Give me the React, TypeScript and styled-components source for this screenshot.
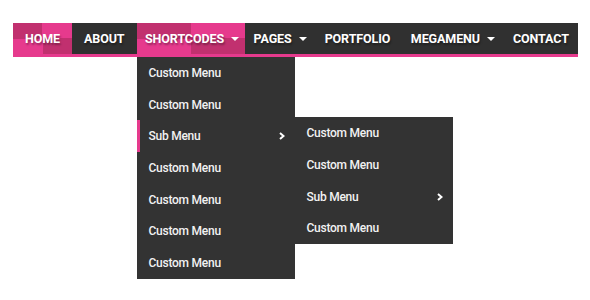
import styled, { createGlobalStyle } from "styled-components";

const GlobalStyle = createGlobalStyle`
  body {
    margin: 0;
    background: #ffffff;
    font-family: Roboto, "Liberation Sans", sans-serif;
  }
`;

const Page = styled.div`
  min-height: 300px;
  padding: 23px 0 0 13px;
  box-sizing: border-box;
`;

const NavBar = styled.ul`
  display: flex;
  width: 565px;
  height: 31px;
  margin: 0;
  padding: 0;
  list-style: none;
  background: #303030;
  border-bottom: 3px solid #e63a8d;
`;

const NavItem = styled.li<{ $active?: boolean; $caret?: boolean }>`
  position: relative;
  display: flex;
  align-items: center;
  padding: ${props => (props.$caret ? "0 6px 0 8.5px" : "0 12px")};
  color: #ffffff;
  font-size: 12.5px;
  font-weight: 700;
  letter-spacing: -0.1px;
  text-transform: uppercase;
  cursor: pointer;
  background: ${props =>
    props.$active
      ? "conic-gradient(#e63a8d 0 25%, #c1306f 0 50%, #e63a8d 0 75%, #c1306f 0)"
      : "transparent"};
  text-shadow: 1px 2px 2px rgba(0, 0, 0, 0.35);
`;

const Caret = styled.span`
  width: 0;
  height: 0;
  margin-left: 7px;
  border-left: 4px solid transparent;
  border-right: 4px solid transparent;
  border-top: 4.5px solid #ffffff;
`;

const Dropdown = styled.ul<{ $nested?: boolean }>`
  position: absolute;
  top: ${props => (props.$nested ? "-3px" : "34px")};
  left: ${props => (props.$nested ? "100%" : "0px")};
  width: 158px;
  margin: 0;
  padding: 0;
  list-style: none;
  background: #333333;
  text-shadow: none;
  text-transform: none;
  letter-spacing: -0.25px;
  z-index: 2;
`;

const MenuRow = styled.li<{ $current?: boolean }>`
  position: relative;
  display: flex;
  align-items: center;
  justify-content: space-between;
  height: 31.7px;
  padding: 0 10px 0 ${props => (props.$current ? "9px" : "12px")};
  border-left: ${props => (props.$current ? "3px solid #e63a8d" : "0")};
  color: #f2f2f2;
  font-size: 12px;
  font-weight: 500;
`;

const Chevron = () => (
  <svg width="6" height="8" viewBox="0 0 6 8">
    <path d="M1 1 L4.5 4 L1 7" fill="none" stroke="#ffffff" strokeWidth="2" />
  </svg>
);

function NestedMenu() {
  return (
    <Dropdown $nested>
      <MenuRow>Custom Menu</MenuRow>
      <MenuRow>Custom Menu</MenuRow>
      <MenuRow>
        Sub Menu
        <Chevron />
      </MenuRow>
      <MenuRow>Custom Menu</MenuRow>
    </Dropdown>
  );
}

export default function App() {
  return (
    <>
      <GlobalStyle />
      <Page>
        <NavBar>
          <NavItem $active>Home</NavItem>
          <NavItem>About</NavItem>
          <NavItem $active $caret>
            Shortcodes
            <Caret />
            <Dropdown>
              <MenuRow>Custom Menu</MenuRow>
              <MenuRow>Custom Menu</MenuRow>
              <MenuRow $current>
                Sub Menu
                <Chevron />
                <NestedMenu />
              </MenuRow>
              <MenuRow>Custom Menu</MenuRow>
              <MenuRow>Custom Menu</MenuRow>
              <MenuRow>Custom Menu</MenuRow>
              <MenuRow>Custom Menu</MenuRow>
            </Dropdown>
          </NavItem>
          <NavItem $caret>
            Pages
            <Caret />
          </NavItem>
          <NavItem>Portfolio</NavItem>
          <NavItem $caret>
            Megamenu
            <Caret />
          </NavItem>
          <NavItem>Contact</NavItem>
        </NavBar>
      </Page>
    </>
  );
}
